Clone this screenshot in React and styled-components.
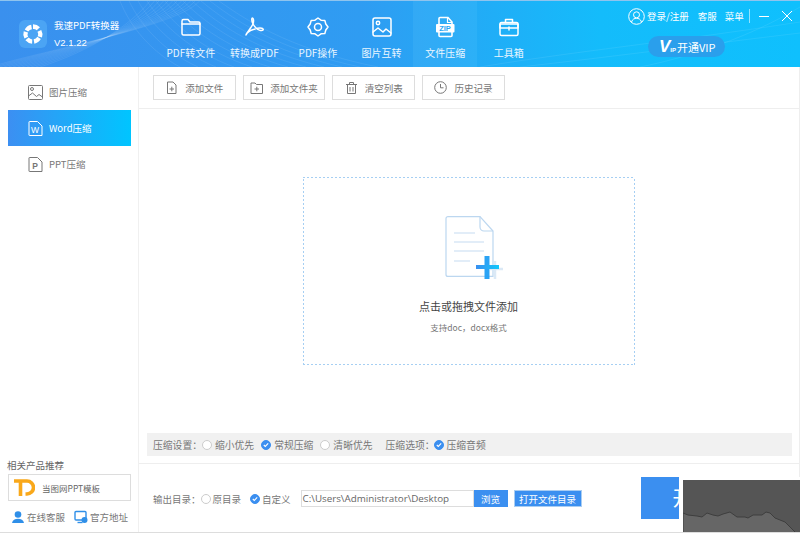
import React from "react";
import styled, { createGlobalStyle } from "styled-components";

const GlobalStyle = createGlobalStyle`
    html, body { margin: 0; padding: 0; background: #fff; }
    * { box-sizing: border-box; }
    body { font-family: "Noto Sans CJK SC", "Liberation Sans", sans-serif; }
`;

const Window = styled.div`
    position: relative;
    width: 800px;
    height: 533px;
    overflow: hidden;
    display: flex;
    flex-direction: column;
    background: #fff;
    border-bottom: 1px solid #ddd;
    color: #666;
`;

/* header */
const Header = styled.header`
    position: relative;
    flex: 0 0 67px;
    display: flex;
    background: linear-gradient(90deg, #3a90ee 0%, #2f9cf2 45%, #14bcfb 75%, #0fc0fd 100%);
    border-top: 1px solid #8fc4ee;
    color: #fff;
`;
const HeaderLines = styled.svg`
    position: absolute;
    left: 0;
    top: 0;
    width: 800px;
    height: 66px;
    pointer-events: none;
`;
const Brand = styled.div`
    position: relative;
    flex: 0 0 159px;
    display: flex;
    gap: 7px;
    padding: 19px 0 0 19px;
`;
const LogoBox = styled.div`
    width: 28px;
    height: 28px;
    border-radius: 6px;
    background: #4ba4f4;
    display: flex;
    align-items: center;
    justify-content: center;
`;
const BrandText = styled.div`
    display: flex;
    flex-direction: column;
    gap: 4px;
    margin-top: -2px;
`;
const BrandName = styled.span`
    font-size: 9.5px;
    line-height: 14px;
    white-space: nowrap;
`;
const BrandVersion = styled.span`
    font-size: 9.5px;
    line-height: 13px;
    font-family: "Liberation Sans", sans-serif;
`;
const Nav = styled.nav`
    position: relative;
    display: flex;
`;
const NavItem = styled.div`
    width: 63.6px;
    height: 66px;
    display: flex;
    flex-direction: column;
    align-items: center;
    padding-top: 15px;
    background: ${(p) => (p.$active ? "rgba(120, 215, 255, 0.12)" : "transparent")};
`;
const NavIcon = styled.svg`
    width: 22px;
    height: 22px;
    fill: none;
    stroke: #fff;
    stroke-width: 1.5;
    stroke-linecap: round;
    stroke-linejoin: round;
`;
const NavLabel = styled.span`
    margin-top: 8px;
    font-size: 10px;
    line-height: 14px;
    white-space: nowrap;
    color: #eaf6ff;
`;
const HeaderRight = styled.div`
    position: absolute;
    right: 0;
    top: 5px;
    width: 172px;
    display: flex;
    flex-direction: column;
    align-items: flex-start;
    gap: 10px;
`;
const TopLinks = styled.div`
    display: flex;
    align-items: center;
    height: 20px;
    font-size: 9.5px;
    white-space: nowrap;
`;
const UserLink = styled.span`
    display: flex;
    align-items: center;
    gap: 2px;
    margin-right: 9px;
`;
const TopLink = styled.span`
    margin-right: 8px;
`;
const Divider = styled.span`
    width: 1px;
    height: 14px;
    background: rgba(255, 255, 255, 0.55);
    margin: 0 8px 0 -3px;
`;
const WinButton = styled.svg`
    width: 12px;
    height: 12px;
    stroke: #fff;
    stroke-width: 1;
    fill: none;
    margin-right: ${(p) => p.$gap || 0}px;
`;
const VipPill = styled.div`
    margin-left: 20px;
    width: 77px;
    height: 21px;
    border-radius: 11px;
    background: #2a9fec;
    display: flex;
    align-items: center;
    padding-left: 11px;
    font-size: 11px;
    white-space: nowrap;
`;
const VipMark = styled.span`
    font-family: "Liberation Sans", sans-serif;
    font-style: italic;
    font-weight: 700;
    font-size: 17px;
    line-height: 17px;
`;
const VipSmall = styled.span`
    font-family: "Liberation Sans", sans-serif;
    font-size: 6px;
    line-height: 7px;
    font-weight: 700;
    align-self: flex-end;
    margin: 0 1px 3px 0;
`;

/* body */
const Body = styled.div`
    flex: 1;
    display: flex;
    min-height: 0;
`;
const Sidebar = styled.aside`
    flex: 0 0 139px;
    border-right: 1px solid #f0f0f0;
    display: flex;
    flex-direction: column;
    justify-content: space-between;
    padding: 7px 0 0 8px;
`;
const SideMenu = styled.div`
    display: flex;
    flex-direction: column;
    width: 123px;
`;
const SideItem = styled.div`
    height: 36px;
    display: flex;
    align-items: center;
    gap: 6px;
    padding-left: 20px;
    font-size: 9.5px;
    color: ${(p) => (p.$active ? "#fff" : "#777")};
    background: ${(p) => (p.$active ? "linear-gradient(90deg, #3c8ff2, #00c5ff)" : "transparent")};
`;
const SideIcon = styled.svg`
    width: 15px;
    height: 15px;
    fill: none;
    stroke: ${(p) => (p.$active ? "#fff" : "#777")};
    stroke-width: 1;
`;
const SideFoot = styled.div`
    display: flex;
    flex-direction: column;
`;
const FootTitle = styled.div`
    margin-left: -1px;
    font-size: 9.5px;
    line-height: 14px;
    color: #666;
`;
const Promo = styled.div`
    width: 123px;
    height: 27px;
    margin-top: 2px;
    border: 1px solid #ddd;
    display: flex;
    align-items: center;
    gap: 7px;
    padding-left: 5px;
    font-size: 8.5px;
    color: #666;
`;
const FootLinks = styled.div`
    height: 31px;
    display: flex;
    align-items: center;
    padding-left: 3px;
    font-size: 9.5px;
    color: #777;
`;
const FootLink = styled.span`
    display: flex;
    align-items: center;
    gap: 2px;
    margin-right: 9px;
    white-space: nowrap;
`;

const Main = styled.main`
    flex: 1;
    display: flex;
    flex-direction: column;
    min-width: 0;
    border-right: 1px solid #eee;
`;
const Toolbar = styled.div`
    flex: 0 0 42px;
    display: flex;
    gap: 7px;
    padding: 8px 0 0 14px;
    border-bottom: 1px solid #eee;
`;
const ToolButton = styled.div`
    width: 82.7px;
    height: 25px;
    border: 1px solid #ddd;
    display: flex;
    align-items: center;
    justify-content: center;
    gap: 7px;
    font-size: 9.5px;
    color: #777;
    white-space: nowrap;
`;
const ToolIcon = styled.svg`
    flex: none;
    width: 13px;
    height: 13px;
    fill: none;
    stroke: #777;
    stroke-width: 1;
`;
const DropArea = styled.div`
    flex: 1;
    display: flex;
    align-items: flex-start;
    justify-content: center;
    padding: 68px 1px 0 0;
`;
const DropZone = styled.div`
    width: 332px;
    height: 188px;
    background:
        repeating-linear-gradient(90deg, #a6cff3 0 2px, transparent 2px 4px) top / 100% 1px no-repeat,
        repeating-linear-gradient(90deg, #a6cff3 0 2px, transparent 2px 4px) bottom / 100% 1px no-repeat,
        repeating-linear-gradient(0deg, #a6cff3 0 2px, transparent 2px 4px) left / 1px 100% no-repeat,
        repeating-linear-gradient(0deg, #a6cff3 0 2px, transparent 2px 4px) right / 1px 100% no-repeat;
    display: flex;
    flex-direction: column;
    align-items: center;
    padding-top: 39px;
`;
const DropTitle = styled.div`
    margin-top: 18px;
    font-size: 11px;
    line-height: 16px;
    color: #444;
`;
const DropHint = styled.div`
    margin-top: 7px;
    font-size: 8.5px;
    line-height: 12px;
    color: #777;
`;
const SettingBar = styled.div`
    margin: 0 7px 0 8px;
    height: 23px;
    background: #f1f1f1;
    display: flex;
    align-items: center;
    padding-left: 6px;
    font-size: 9.8px;
    color: #777;
    white-space: nowrap;
`;
const OutputRow = styled.div`
    flex: 0 0 69px;
    margin-top: 7px;
    border-top: 1px solid #eee;
    display: flex;
    align-items: flex-start;
    padding: 26px 0 0 14px;
    font-size: 9.5px;
    color: #777;
    white-space: nowrap;
`;
const OutputLine = styled.div`
    display: flex;
    align-items: center;
    height: 17px;
`;
const Choice = styled.span`
    display: flex;
    align-items: center;
    gap: ${(p) => p.$inner ?? 3}px;
    margin-left: ${(p) => p.$gap ?? 4}px;
`;
const Radio = styled.span`
    flex: none;
    width: 10px;
    height: 10px;
    border-radius: 50%;
    border: 1px solid ${(p) => (p.$on ? "#3b8ff0" : "#ccc")};
    background: ${(p) => (p.$on ? "#3b8ff0" : "#fff")};
    display: flex;
    align-items: center;
    justify-content: center;
`;
const PathInput = styled.div`
    width: 173px;
    height: 17px;
    margin-left: 10px;
    border: 1px solid #ddd;
    padding-left: 1px;
    font-family: "Open Sans", sans-serif;
    font-size: 9.8px;
    line-height: 16px;
    color: #666;
`;
const BlueButton = styled.div`
    height: 17px;
    width: ${(p) => p.$w}px;
    margin-left: ${(p) => p.$gap || 0}px;
    background: #3b8ff0;
    border: 1px solid ${(p) => (p.$outlined ? "#a9cdf2" : "#3b8ff0")};
    color: #fff;
    font-size: 9.5px;
    display: flex;
    align-items: center;
    justify-content: center;
`;
const StartButton = styled.div`
    flex: none;
    width: 104px;
    height: 42px;
    margin: -13px 0 0 59px;
    background: #3b8ff0;
    color: #fff;
    font-size: 20px;
    line-height: 42px;
    text-align: center;
`;
const Patch = styled.div`
    position: absolute;
    left: 679px;
    top: 477px;
    width: 121px;
    height: 56px;
    padding: 3px 0 0 4px;
    background: #fff;
`;
const PatchPhoto = styled.svg`
    display: block;
    width: 117px;
    height: 53px;
`;

const Check = () => (
    <svg width="6" height="6" viewBox="0 0 6 6" fill="none" stroke="#fff" strokeWidth="1.1">
        <path d="M.8 3l1.5 1.5L5.2 1.4" />
    </svg>
);

const navIcons = {
    folder: <><path d="M2 8V5a1.5 1.5 0 0 1 1.5-1.5H8L10 6h8.5A1.5 1.5 0 0 1 20 7.5V8" /><path d="M2 8h18v9.5a1.5 1.5 0 0 1-1.5 1.5h-15A1.5 1.5 0 0 1 2 17.5z" /></>,
    acrobat: <path d="M3 19c2-4 5-7 7-11 1-3 .5-6-.5-6S8.5 5 10 8c2 3.5 5 6 7.5 6.5 2.5.5 3.5-1 2-2-2-1-7 0-12 2-2 1-4 2-4.500 4.500z" />,
    flower: <><path d="M11 2l3 2.200 3.800.2 1 3.600L21 11l-2.200 3 -1 3.600-3.800.2L11 20l-3-2.200-3.800-.2-1-3.600L1 11l2.200-3 1-3.600L8 4.200z" /><circle cx="11" cy="11" r="3.500" /></>,
    picture: <><rect x="2" y="2" width="18" height="18" rx="2" /><circle cx="7" cy="7" r="1.700" /><path d="M2 16l5-4 5 4 3-3 5 4" /></>,
    box: <><path d="M2 8h18v10a1.500 1.500 0 0 1-1.500 1.500h-15A1.500 1.500 0 0 1 2 18z" /><path d="M2 8a1.500 1.500 0 0 1 1.500-1.500h15A1.500 1.500 0 0 1 20 8v4H2z" /><path d="M7.500 6.500V3.500h7v3" /><path d="M11 11v3" /></>,
};

const navItems = [
    ["PDF转文件", navIcons.folder],
    ["转换成PDF", navIcons.acrobat],
    ["PDF操作", navIcons.flower],
    ["图片互转", navIcons.picture],
    ["文件压缩", null],
    ["工具箱", navIcons.box],
];

const ZipIcon = () => (
    <svg width="22" height="22" viewBox="0 0 22 22">
        <path d="M5 8V2.500A1 1 0 0 1 6 1.500h8l4 4.500v2M18 16v3.500a1 1 0 0 1-1 1H6a1 1 0 0 1-1-1V16" fill="none" stroke="#fff" strokeWidth="1.600" />
        <path d="M13.500 1.500v5h4.500" fill="none" stroke="#fff" strokeWidth="1.200" />
        <rect x="2" y="8" width="18.500" height="8.500" rx="1" fill="#fff" />
        <text x="11" y="15" fontSize="7.500" fontWeight="700" textAnchor="middle" fill="#2aa6f4" fontFamily="Liberation Sans">ZIP</text>
    </svg>
);

const Logo = () => (
    <svg width="22" height="22" viewBox="0 0 24 24" fill="#fff">
        <path d="M12 1.500a10.500 10.500 0 0 1 7.600 3.200l-3.500 3.200A5.500 5.500 0 0 0 12 6.500z" />
        <path d="M21 7.500a10.500 10.500 0 0 1 .8 8.200l-4.600-1.200a5.500 5.500 0 0 0-.3-5z" />
        <path d="M20.500 17.500a10.500 10.500 0 0 1-7 5l-.8-4.700a5.500 5.500 0 0 0 4-2.800z" />
        <path d="M11 22.500a10.500 10.500 0 0 1-7.300-3.600l3.500-3a5.500 5.500 0 0 0 4 2z" />
        <path d="M2.700 17a10.500 10.500 0 0 1-.8-8l4.600 1.300a5.500 5.500 0 0 0 .2 4.600z" />
        <path d="M3 7a10.500 10.500 0 0 1 7-5l.8 4.700a5.500 5.500 0 0 0-4 2.500z" />
    </svg>
);

const TdLogo = () => (
    <svg width="21" height="17" viewBox="0 0 21 17" fill="none" stroke="#f9a81a" strokeWidth="3.600">
        <path d="M0 2h11M6.500 2v15" />
        <path d="M11 2h2a6.500 6.500 0 0 1 0 13h-1.500" />
    </svg>
);

const fileBody = "M1.500 .5h8l4.500 4.500v9.500h-12.500a.5 .5 0 0 1-.5-.5V1a.5 .5 0 0 1 .5-.5z";

const tools = [
    ["添加文件", <><path d="M2.500 1h5.500l3 3v8.500h-8.500z" /><path d="M4.500 8h4.500M6.800 5.700v4.600" /></>],
    ["添加文件夹", <><path d="M1 3.500V2h4l1.500 1.500h6v9h-11.500z" /><path d="M4.500 8h4.500M6.800 5.700v4.600" /></>],
    ["清空列表", <><path d="M2.500 3.500v9h8v-9M1 3.500h11M4.500 3.500V1.500h4v2M5 6v4.500M8 6v4.500" /></>],
    ["历史记录", <><circle cx="6.500" cy="6.500" r="5.800" /><path d="M6.500 3v3.800h3" /></>],
];

// fine fan of curves behind the header
const fan = Array.from({ length: 12 }, (_, i) => i * 9);

export default function App() {
    return (
        <Window>
            <GlobalStyle />
            <Header>
                <HeaderLines viewBox="0 0 800 66" fill="none" stroke="#fff" strokeOpacity="0.08">
                    {fan.map((d) => (
                        <path key={d} d={`M${120 + d} 0c${10 + d / 4} 25 ${30 + d / 2} 50 ${60 + d} 66M${150 + d / 2} 0c-20 25-${60 + d} 50-${110 + d} 66`} />
                    ))}
                    <path d="M480 66c90-15 190-25 320-45M520 66c90-10 180-22 280-34M640 66c50-10 110-30 160-60" />
                </HeaderLines>
                <Brand>
                    <LogoBox><Logo /></LogoBox>
                    <BrandText>
                        <BrandName>我速PDF转换器</BrandName>
                        <BrandVersion>V2.1.22</BrandVersion>
                    </BrandText>
                </Brand>
                <Nav>
                    {navItems.map(([label, icon]) => (
                        <NavItem key={label} $active={!icon}>
                            {icon ? <NavIcon viewBox="0 0 22 22">{icon}</NavIcon> : <ZipIcon />}
                            <NavLabel>{label}</NavLabel>
                        </NavItem>
                    ))}
                </Nav>
                <HeaderRight>
                    <TopLinks>
                        <UserLink>
                            <svg width="17" height="17" viewBox="0 0 17 17" fill="none" stroke="#fff" strokeWidth="1">
                                <circle cx="8.500" cy="8.500" r="7.800" />
                                <circle cx="8.500" cy="6.800" r="3" />
                                <path d="M3.500 14c1-3 3-3.700 5-3.700s4 .7 5 3.700" />
                            </svg>
                            登录/注册
                        </UserLink>
                        <TopLink>客服</TopLink>
                        <TopLink>菜单</TopLink>
                        <Divider />
                        <WinButton viewBox="0 0 12 12" $gap={11}><path d="M1 6.500h10" /></WinButton>
                        <WinButton viewBox="0 0 12 12"><path d="M1 1l10 10M11 1L1 11" /></WinButton>
                    </TopLinks>
                    <VipPill>
                        <VipMark>V</VipMark>
                        <VipSmall>IP</VipSmall>
                        开通VIP
                    </VipPill>
                </HeaderRight>
            </Header>
            <Body>
                <Sidebar>
                    <SideMenu>
                        <SideItem>
                            <SideIcon viewBox="0 0 15 15"><rect x=".5" y=".5" width="14" height="14" rx="1" /><circle cx="4" cy="4" r="1.500" /><path d="M.5 11l4-3 4 3.500 2.500-2 3.500 2.500" /></SideIcon>
                            图片压缩
                        </SideItem>
                        <SideItem $active>
                            <SideIcon $active viewBox="0 0 15 15"><path d={fileBody} /><text x="7" y="11.500" fontSize="8.500" fontFamily="Liberation Sans" textAnchor="middle" fill="#fff" stroke="none">W</text></SideIcon>
                            Word压缩
                        </SideItem>
                        <SideItem>
                            <SideIcon viewBox="0 0 15 15"><path d={fileBody} /><text x="7" y="11.500" fontSize="8.500" fontWeight="700" fontFamily="Liberation Sans" textAnchor="middle" fill="#777" stroke="none">P</text></SideIcon>
                            PPT压缩
                        </SideItem>
                    </SideMenu>
                    <SideFoot>
                        <FootTitle>相关产品推荐</FootTitle>
                        <Promo><TdLogo />当图网PPT模板</Promo>
                        <FootLinks>
                            <FootLink>
                                <svg width="14" height="14" viewBox="0 0 14 14" fill="#2f8fe8">
                                    <circle cx="7" cy="4.500" r="3.300" />
                                    <path d="M1 13c.5-3 3-4.300 6-4.300s5.500 1.300 6 4.300z" />
                                </svg>
                                在线客服
                            </FootLink>
                            <FootLink>
                                <svg width="14" height="14" viewBox="0 0 14 14" fill="none" stroke="#2f8fe8" strokeWidth="1.400">
                                    <rect x="1" y="1.500" width="11" height="8.500" rx="1" />
                                    <path d="M3.500 12.500h5" />
                                    <circle cx="10.500" cy="10" r="3" fill="#2f8fe8" stroke="none" />
                                </svg>
                                官方地址
                            </FootLink>
                        </FootLinks>
                    </SideFoot>
                </Sidebar>
                <Main>
                    <Toolbar>
                        {tools.map(([label, icon]) => (
                            <ToolButton key={label}>
                                <ToolIcon viewBox="0 0 13 13">{icon}</ToolIcon>
                                {label}
                            </ToolButton>
                        ))}
                    </Toolbar>
                    <DropArea>
                        <DropZone>
                            <svg width="68" height="64" viewBox="0 0 68 64" fill="none">
                                <path d="M13 .6h32l13 14.400v45.400H13a2 2 0 0 1-2-2V2.600a2 2 0 0 1 2-2z" stroke="#bcd7f0" strokeWidth="1.200" />
                                <path d="M45 .6v10.400a4 4 0 0 0 4 4h9" stroke="#bcd7f0" strokeWidth="1.200" />
                                <path d="M19 17h21M19 26h30M19 35h30M19 45h16" stroke="#c5dcf2" strokeWidth="1.200" />
                                <path d="M60 45v18M55 53h13" stroke="#dbe9f6" strokeWidth="2.500" />
                                <path d="M52 40v23" stroke="#2aa3f5" strokeWidth="5" />
                                <path d="M41 51h23" stroke="url(#plusGrad)" strokeWidth="4" />
                                <defs>
                                    <linearGradient id="plusGrad" gradientUnits="userSpaceOnUse" x1="41" y1="0" x2="64" y2="0">
                                        <stop offset="0" stopColor="#3a8ff0" />
                                        <stop offset="1" stopColor="#10c8fb" />
                                    </linearGradient>
                                </defs>
                            </svg>
                            <DropTitle>点击或拖拽文件添加</DropTitle>
                            <DropHint>支持doc，docx格式</DropHint>
                        </DropZone>
                    </DropArea>
                    <SettingBar>
                        压缩设置：
                        <Choice $gap={0}><Radio />缩小优先</Choice>
                        <Choice $gap={7}><Radio $on><Check /></Radio>常规压缩</Choice>
                        <Choice $gap={7}><Radio />清晰优先</Choice>
                        <Choice $gap={13}>压缩选项：</Choice>
                        <Choice $gap={-1}><Radio $on><Check /></Radio>压缩音频</Choice>
                    </SettingBar>
                    <OutputRow>
                        <OutputLine>
                            输出目录：
                            <Choice $gap={0} $inner={2}><Radio />原目录</Choice>
                            <Choice $gap={9} $inner={2}><Radio $on><Check /></Radio>自定义</Choice>
                            <PathInput>C:\Users\Administrator\Desktop</PathInput>
                            <BlueButton $w={34}>浏览</BlueButton>
                            <BlueButton $w={68} $gap={6} $outlined>打开文件目录</BlueButton>
                        </OutputLine>
                        <StartButton>开始</StartButton>
                    </OutputRow>
                </Main>
            </Body>
            <Patch>
                <PatchPhoto viewBox="0 0 117 53">
                    <rect width="117" height="53" fill="#555" />
                    <path d="M0 33l5 2 9 1 5 1 5-4 6 2 5 1 5-2 7-2 7 5 8 0 3 1 5-3 9 0 4-3 4 1 5 5 10 4 5 5 5 5v1H0z" fill="#666" stroke="#3e3e3e" strokeWidth="1" />
                </PatchPhoto>
            </Patch>
        </Window>
    );
}
